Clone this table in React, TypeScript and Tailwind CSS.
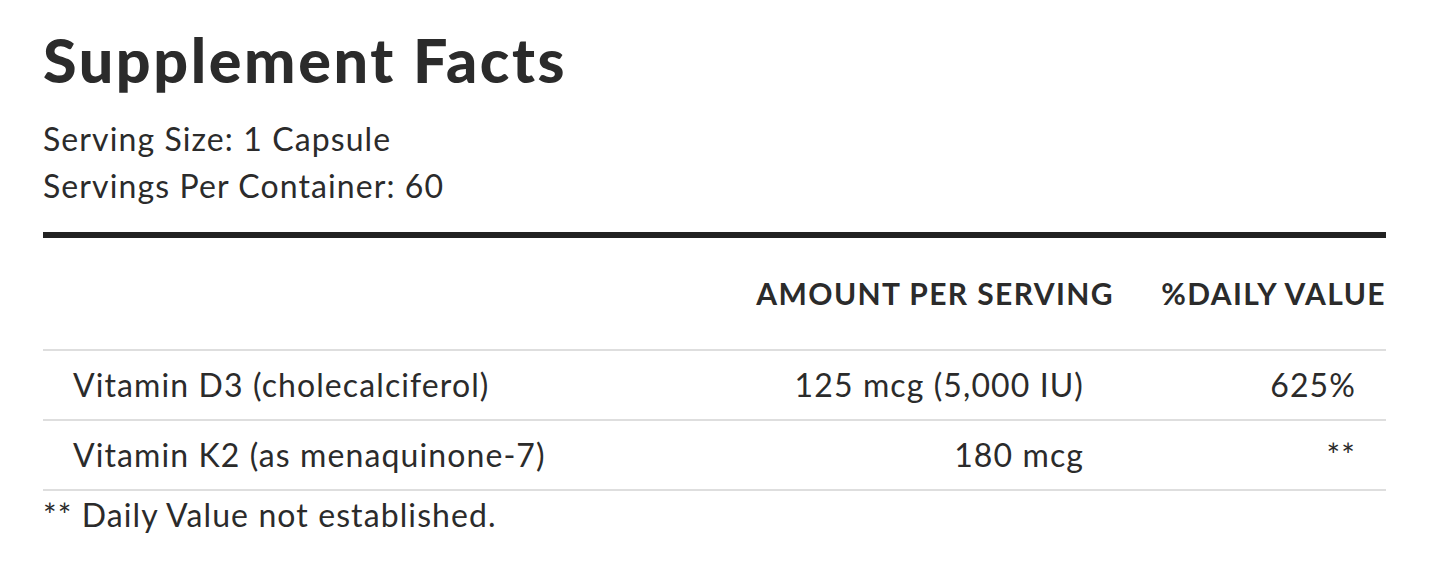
export default function App() {
  const rows = [
    { name: 'Vitamin D3 (cholecalciferol)', amount: '125 mcg (5,000 IU)', dv: '625%' },
    { name: 'Vitamin K2 (as menaquinone-7)', amount: '180 mcg', dv: '**' },
  ]

  return (
    <div className="min-h-screen bg-white text-[#2b2b2b] font-['Lato',sans-serif]">
      <div className="w-[1343px] ml-[43px] pt-[29px]">
        <h1 className="text-[61px] font-black leading-[61px] tracking-[2.6px]">Supplement Facts</h1>
        <div className="mt-[25px] text-[32px] leading-[47px] tracking-[1.1px]">
          <p>Serving Size: 1 Capsule</p>
          <p>Servings Per Container: 60</p>
        </div>

        <table className="w-full mt-[23px] border-t-[6px] border-[#222] border-collapse">
          <thead>
            <tr className="border-b-2 border-[#dedede]">
              <th className="h-[115px]"></th>
              <th className="text-right text-[30px] font-bold uppercase tracking-[1.4px] w-[420px] align-middle">
                Amount per serving
              </th>
              <th className="text-right text-[30px] font-bold uppercase tracking-[1.4px] w-[272px] align-middle">
                %Daily Value
              </th>
            </tr>
          </thead>
          <tbody className="text-[32px] tracking-[1.1px]">
            {rows.map(r => (
              <tr key={r.name} className="border-b-2 border-[#dedede]">
                <td className="h-[70px] pl-[30px] align-middle">{r.name}</td>
                <td className="pr-[30px] text-right align-middle">{r.amount}</td>
                <td className="pr-[30px] text-right align-middle">{r.dv}</td>
              </tr>
            ))}
          </tbody>
        </table>

        <p className="text-[32px] leading-[47px] tracking-[1.1px]">** Daily Value not established.</p>
      </div>
    </div>
  )
}
